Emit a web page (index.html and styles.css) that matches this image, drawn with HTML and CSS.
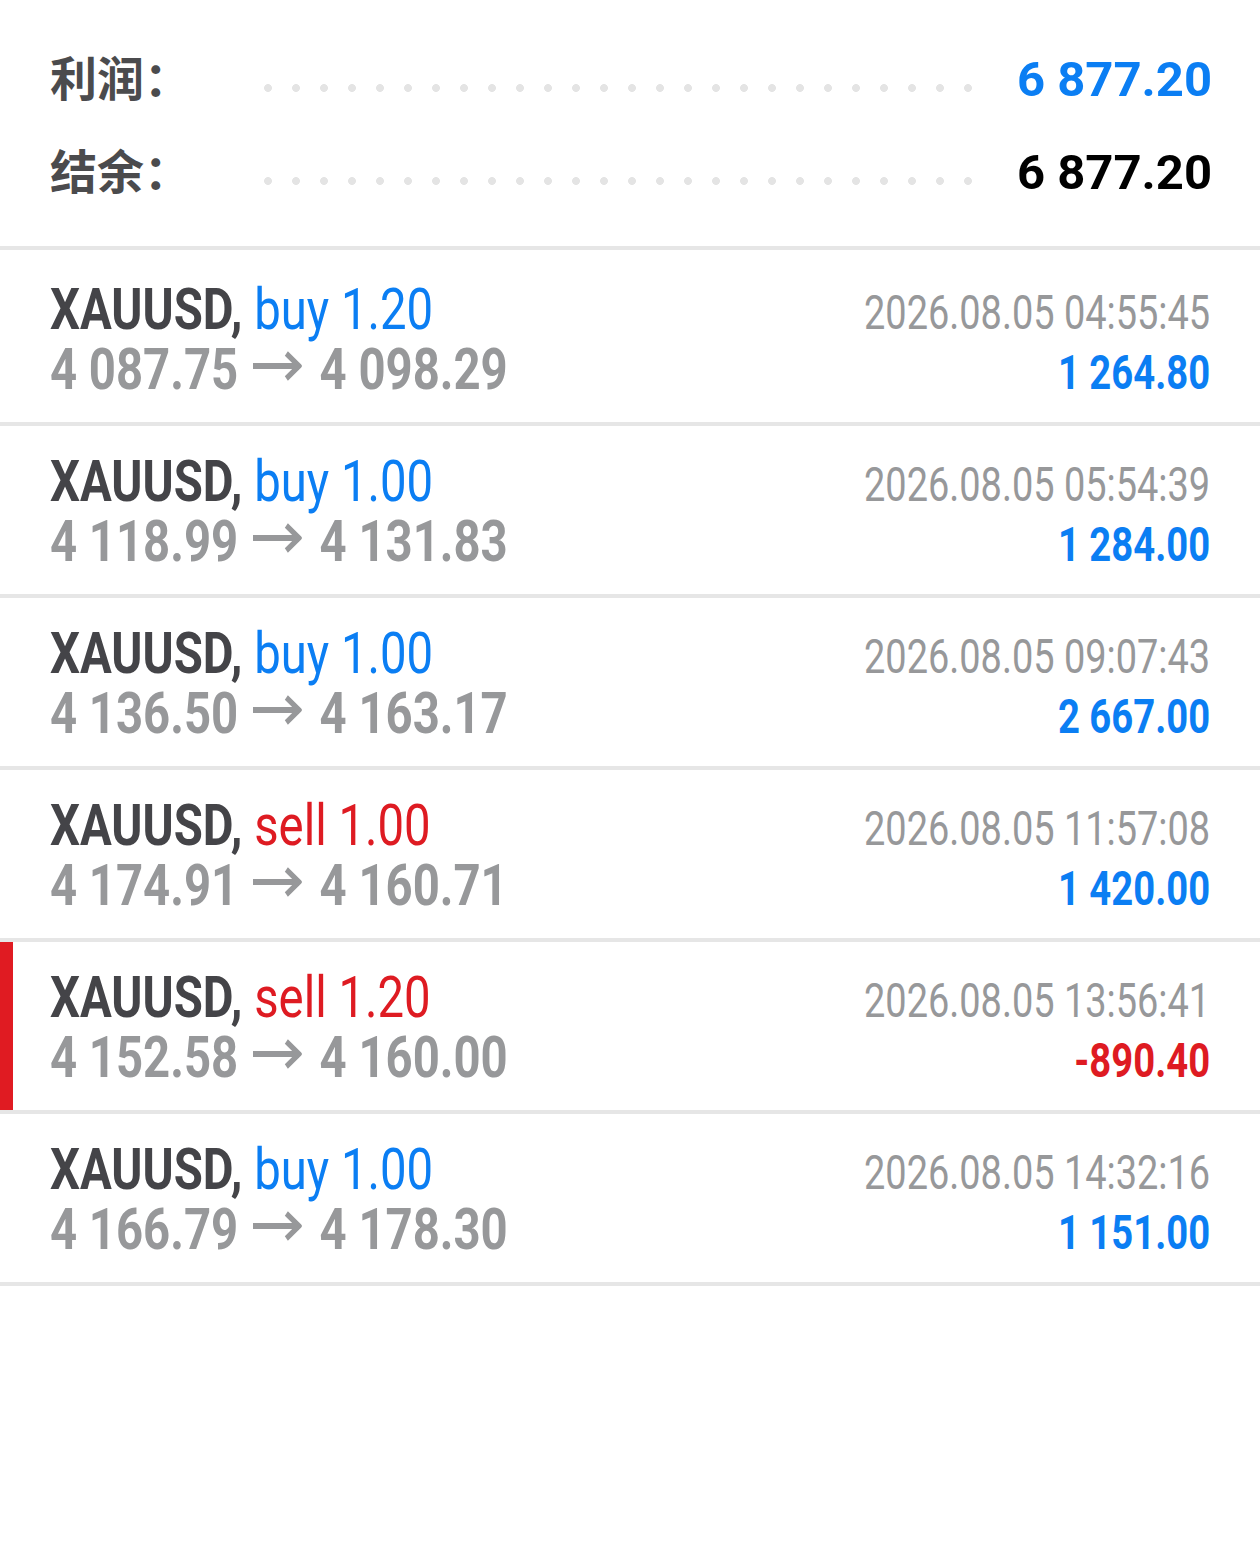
FILE: index.html
```html
<!DOCTYPE html>
<html lang="zh">
<head>
<meta charset="utf-8">
<link rel="stylesheet" href="styles.css">
</head>
<body>
<div class="page">
  <section class="summary">
    <div class="sum-row">
      <span class="sum-label">利润：</span>
      <span class="dots"></span>
      <span class="sum-value blue">6 877.20</span>
    </div>
    <div class="sum-row">
      <span class="sum-label">结余：</span>
      <span class="dots"></span>
      <span class="sum-value black">6 877.20</span>
    </div>
  </section>

  <div class="trade">
    <div class="line">
      <span class="title"><b>XAUUSD,</b> <span class="blue">buy 1.20</span></span>
      <span class="date">2026.08.05 04:55:45</span>
    </div>
    <div class="line">
      <span class="prices">4 087.75 <svg class="arrow" viewBox="0 0 60 30" role="img" aria-label="→"><path d="M0 15H57M41 2.5L56.5 15L41 27.5"/></svg> 4 098.29</span>
      <span class="profit blue">1 264.80</span>
    </div>
  </div>

  <div class="trade">
    <div class="line">
      <span class="title"><b>XAUUSD,</b> <span class="blue">buy 1.00</span></span>
      <span class="date">2026.08.05 05:54:39</span>
    </div>
    <div class="line">
      <span class="prices">4 118.99 <svg class="arrow" viewBox="0 0 60 30" role="img" aria-label="→"><path d="M0 15H57M41 2.5L56.5 15L41 27.5"/></svg> 4 131.83</span>
      <span class="profit blue">1 284.00</span>
    </div>
  </div>

  <div class="trade">
    <div class="line">
      <span class="title"><b>XAUUSD,</b> <span class="blue">buy 1.00</span></span>
      <span class="date">2026.08.05 09:07:43</span>
    </div>
    <div class="line">
      <span class="prices">4 136.50 <svg class="arrow" viewBox="0 0 60 30" role="img" aria-label="→"><path d="M0 15H57M41 2.5L56.5 15L41 27.5"/></svg> 4 163.17</span>
      <span class="profit blue">2 667.00</span>
    </div>
  </div>

  <div class="trade">
    <div class="line">
      <span class="title"><b>XAUUSD,</b> <span class="red">sell 1.00</span></span>
      <span class="date">2026.08.05 11:57:08</span>
    </div>
    <div class="line">
      <span class="prices">4 174.91 <svg class="arrow" viewBox="0 0 60 30" role="img" aria-label="→"><path d="M0 15H57M41 2.5L56.5 15L41 27.5"/></svg> 4 160.71</span>
      <span class="profit blue">1 420.00</span>
    </div>
  </div>

  <div class="trade selected">
    <div class="line">
      <span class="title"><b>XAUUSD,</b> <span class="red">sell 1.20</span></span>
      <span class="date">2026.08.05 13:56:41</span>
    </div>
    <div class="line">
      <span class="prices">4 152.58 <svg class="arrow" viewBox="0 0 60 30" role="img" aria-label="→"><path d="M0 15H57M41 2.5L56.5 15L41 27.5"/></svg> 4 160.00</span>
      <span class="profit red">-890.40</span>
    </div>
  </div>

  <div class="trade">
    <div class="line">
      <span class="title"><b>XAUUSD,</b> <span class="blue">buy 1.00</span></span>
      <span class="date">2026.08.05 14:32:16</span>
    </div>
    <div class="line">
      <span class="prices">4 166.79 <svg class="arrow" viewBox="0 0 60 30" role="img" aria-label="→"><path d="M0 15H57M41 2.5L56.5 15L41 27.5"/></svg> 4 178.30</span>
      <span class="profit blue">1 151.00</span>
    </div>
  </div>
</div>
</body>
</html>
```

FILE: styles.css
```css
* { box-sizing: border-box; }

html, body {
  margin: 0;
  padding: 0;
  background: #ffffff;
}

body {
  font-family: Roboto, "Noto Sans CJK SC", sans-serif;
  width: 1260px;
}

.blue { color: #0b7ef3; }
.red { color: #de1b22; }
.black { color: #000000; }

.summary {
  padding: 33px 50px 27px;
  border-bottom: 4px solid #e6e6e6;
}

.sum-row {
  display: grid;
  grid-template-columns: 214px 728px 1fr;
  align-items: center;
  height: 93px;
}

.sum-label {
  font-family: "Noto Sans CJK SC", sans-serif;
  font-weight: 700;
  font-size: 47px;
  color: #4b4b4d;
  line-height: 1;
  margin-top: -8px;
  white-space: nowrap;
}

.dots {
  height: 8px;
  margin-top: 17px;
  background-image: radial-gradient(circle at 4px 4px, #e4e4e4 3.6px, transparent 4.2px);
  background-size: 28px 8px;
  background-repeat: repeat-x;
}

.sum-value {
  justify-self: end;
  font-family: Roboto, sans-serif;
  font-weight: 700;
  font-size: 49px;
  line-height: 1;
  margin-right: -2px;
}

.trade {
  position: relative;
  height: 172px;
  padding: 25px 50px 0;
  border-bottom: 4px solid #e6e6e6;
}

.trade:first-of-type {
  margin-top: 4px;
}

.trade.selected::before {
  content: "";
  position: absolute;
  left: 0;
  top: 0;
  bottom: 0;
  width: 13px;
  background: #e01b22;
}

.line {
  display: flex;
  justify-content: space-between;
  align-items: baseline;
  height: 60px;
  line-height: 60px;
  white-space: nowrap;
}

.title,
.prices {
  display: inline-block;
  font-size: 58px;
  transform: scaleX(0.815);
  transform-origin: left center;
}

.title b {
  font-weight: 700;
  color: #444448;
}

.title .blue,
.title .red {
  font-weight: 400;
}

.prices {
  font-weight: 700;
  color: #97989a;
}

.arrow {
  width: 60px;
  height: 30px;
  vertical-align: 8px;
  margin: 0 7px 0 4px;
}

.arrow path {
  fill: none;
  stroke: #97989a;
  stroke-width: 6;
}

.date {
  display: inline-block;
  font-size: 48px;
  font-weight: 400;
  color: #97989a;
  transform: scaleX(0.79);
  transform-origin: right center;
}

.profit {
  display: inline-block;
  font-size: 49px;
  font-weight: 700;
  transform: scaleX(0.78);
  transform-origin: right center;
}
```
